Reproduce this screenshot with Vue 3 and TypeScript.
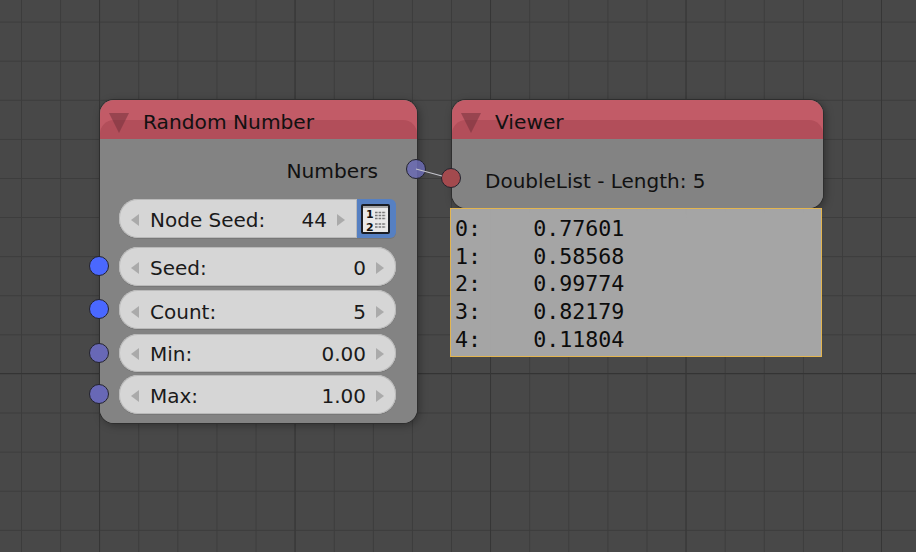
<script setup lang="ts">
interface Field { label: string; value: string; socket: 'bright' | 'dim' }

const fields: Field[] = [
  { label: 'Seed:', value: '0', socket: 'bright' },
  { label: 'Count:', value: '5', socket: 'bright' },
  { label: 'Min:', value: '0.00', socket: 'dim' },
  { label: 'Max:', value: '1.00', socket: 'dim' },
]

const rows: string[] = [
  '0:    0.77601',
  '1:    0.58568',
  '2:    0.99774',
  '3:    0.82179',
  '4:    0.11804',
]
</script>

<template>
  <div class="canvas">
    <section class="node random">
      <header class="head">
        <span class="collapse"></span>
        <span class="title">Random Number</span>
      </header>
      <div class="body">
        <div class="output">
          <span>Numbers</span>
          <i class="socket out"></i>
        </div>
        <div class="seed-row">
          <div class="field joined">
            <span class="arrow left"></span>
            <span class="label">Node Seed:</span>
            <span class="value">44</span>
            <span class="arrow right"></span>
          </div>
          <div class="toggle">
            <svg width="29" height="30" viewBox="0 0 29 30">
              <rect x="1" y="1" width="27" height="28" rx="1" fill="#e9e9e9" stroke="#1a1d24" stroke-width="2" />
              <rect x="2" y="2" width="25" height="2" fill="#a6a6a6" />
              <text x="5" y="13.5" class="num">1</text>
              <text x="5" y="26.5" class="num">2</text>
              <path d="M14 8.5h11M14 11.5h11M14 14.5h11M14 20h11M14 23h11" stroke="#7a7a7a" stroke-width="1.5" stroke-dasharray="2.6 1" fill="none" />
            </svg>
          </div>
        </div>
        <div class="fields">
          <div v-for="f in fields" :key="f.label" class="field">
            <i class="socket in" :class="f.socket"></i>
            <span class="arrow left"></span>
            <span class="label">{{ f.label }}</span>
            <span class="value">{{ f.value }}</span>
            <span class="arrow right"></span>
          </div>
        </div>
      </div>
    </section>

    <section class="node viewer">
      <header class="head">
        <span class="collapse"></span>
        <span class="title">Viewer</span>
      </header>
      <div class="body">
        <i class="socket red"></i>
        <span class="summary">DoubleList - Length: 5</span>
      </div>
    </section>

    <pre class="list"><code v-for="r in rows" :key="r">{{ r }}</code></pre>

    <svg class="link" width="916" height="552" viewBox="0 0 916 552">
      <path d="M416 169 L442 176" stroke="#c4c4cc" stroke-width="1.1" fill="none" />
    </svg>
  </div>
</template>

<style scoped>
.canvas {
  position: relative;
  width: 916px;
  height: 552px;
  overflow: hidden;
  background-color: #484848;
  background-image:
    linear-gradient(to right, #363636 1px, transparent 1px),
    linear-gradient(to bottom, #343434 1px, transparent 1px),
    linear-gradient(to right, #3c3c3c 1px, transparent 1px),
    linear-gradient(to bottom, #3c3c3c 1px, transparent 1px);
  background-size: 195.5px 100%, 100% 552px, 39.1px 39.1px, 39.1px 39.1px;
  background-position: 99px 0, 0 373px, 21px 0, 0 21.6px;
  font-family: "DejaVu Sans", sans-serif;
  font-size: 20.2px;
  color: #111;
}

.node {
  position: absolute;
  top: 100px;
  display: flex;
  flex-direction: column;
  border-radius: 14px;
  background: rgba(134, 134, 134, 0.97);
  box-shadow: 0 0 0 1px #2e2e2e, 2px 2px 8px rgba(0, 0, 0, 0.35);
}

.random {
  left: 100px;
  width: 317px;
  height: 323px;
}

.viewer {
  left: 452px;
  width: 371px;
  height: 108px;
}

.head {
  position: relative;
  flex: none;
  display: flex;
  align-items: center;
  gap: 14px;
  height: 39px;
  padding: 5px 0 0 9px;
  box-sizing: border-box;
  border-radius: 14px 14px 0 0;
  background: #c25b67;
}

.head::before {
  content: "";
  position: absolute;
  left: 0;
  right: 0;
  top: 20px;
  bottom: 0;
  border-radius: 14px 14px 0 0;
  background: #b24e5a;
}

.collapse {
  position: relative;
  top: 1px;
  width: 0;
  height: 0;
  border-left: 10px solid transparent;
  border-right: 10px solid transparent;
  border-top: 20px solid rgba(110, 45, 55, 0.5);
}

.title {
  position: relative;
}

.body {
  position: relative;
  flex: 1;
  border-radius: 0 0 14px 14px;
  background: #838383;
}

.output {
  display: flex;
  justify-content: flex-end;
  align-items: center;
  height: 60px;
  padding: 3px 39px 0 0;
  box-sizing: border-box;
}

.socket {
  position: absolute;
  display: block;
  width: 20px;
  height: 20px;
  box-sizing: border-box;
  border-radius: 50%;
  border: 1px solid #23232e;
}

.out {
  left: 306px;
  top: 20px;
  background: rgba(107, 107, 180, 0.85);
}

.red {
  left: -11px;
  top: 29px;
  background: #a34a4e;
}

.in {
  left: -30px;
  top: 9px;
}

.bright {
  background: #4a68ff;
}

.dim {
  background: #6868b6;
}

.seed-row {
  display: flex;
  margin: 0 21px 0 19px;
  height: 39px;
}

.fields {
  display: flex;
  flex-direction: column;
  gap: 4px;
  margin: 9px 21px 0 19px;
}

.field {
  position: relative;
  flex: none;
  display: flex;
  align-items: center;
  height: 39px;
  box-sizing: border-box;
  padding: 2px 0 0 12px;
  border-radius: 19px;
  background: #d6d6d6;
  box-shadow: inset 0 0 0 1px #b9b9b9, 0 1px 0 #777;
  color: #1a1a1a;
  font-size: 20px;
}

.fields .field:nth-child(2) {
  padding-top: 4px;
}

.fields .field:nth-child(3) {
  height: 38px;
  margin-top: 1px;
}

.fields .field:nth-child(4) {
  margin-top: -1px;
}

.joined {
  flex: 1;
  min-width: 0;
  border-radius: 19px 0 0 19px;
}

.label {
  margin-left: 11px;
}

.value {
  margin-left: auto;
}

.arrow {
  flex: none;
  width: 0;
  height: 0;
  border-top: 6px solid transparent;
  border-bottom: 6px solid transparent;
}

.arrow.left {
  border-right: 8px solid #aaa;
}

.arrow.right {
  margin: 0 12px 0 10px;
  border-left: 8px solid #aaa;
}

.toggle {
  flex: none;
  width: 39px;
  display: flex;
  align-items: center;
  justify-content: center;
  padding-right: 2px;
  box-sizing: border-box;
  border-radius: 0 6px 6px 0;
  background: #5680c2;
  box-shadow: 0 1px 0 #777;
}

.num {
  font-family: "DejaVu Sans", sans-serif;
  font-size: 11px;
  font-weight: 700;
  fill: #111;
}

.summary {
  position: absolute;
  left: 33px;
  top: 30px;
  font-size: 20px;
}

.list {
  position: absolute;
  left: 450px;
  top: 208px;
  width: 372px;
  height: 149px;
  box-sizing: border-box;
  margin: 0;
  padding: 6px 0 0 4px;
  display: flex;
  flex-direction: column;
  border: 1px solid #e3b54f;
  background: rgba(168, 168, 168, 0.97);
  font-family: "DejaVu Sans Mono", monospace;
  font-size: 21.65px;
  line-height: 27.7px;
  color: #0c0c0c;
}

.list code {
  font: inherit;
}

.link {
  position: absolute;
  left: 0;
  top: 0;
  pointer-events: none;
}
</style>
